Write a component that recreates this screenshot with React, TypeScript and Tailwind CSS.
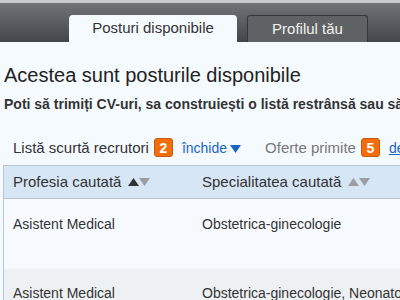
const Tri = ({ dir, color }: { dir: 'up' | 'down'; color: string }) => (
  <svg width="11" height="8" viewBox="0 0 11 8" className="inline-block">
    {dir === 'up' ? <polygon points="0,8 11,8 5.5,0" fill={color} /> : <polygon points="0,0 11,0 5.5,8" fill={color} />}
  </svg>
);

const Badge = ({ n }: { n: number }) => (
  <span className="inline-flex items-center justify-center w-[19px] h-[19px] rounded-[3px] bg-[#f46d0b] border border-[#c85a0c] text-white font-bold text-[14px] leading-none">
    {n}
  </span>
);

const rows = [
  { prof: 'Asistent Medical', spec: 'Obstetrica-ginecologie', bg: 'bg-[#f6faff]', h: 'h-[70px] pt-[16px]' },
  { prof: 'Asistent Medical', spec: 'Obstetrica-ginecologie, Neonatologie', bg: 'bg-[#eef1f4]', h: 'h-[70px] pt-[15px]' },
];

export default function App() {
  return (
    <div className="w-[400px] h-[300px] overflow-hidden bg-[#f5faff] font-['Liberation_Sans',Arial,sans-serif]">
      {/* top nav */}
      <div className="h-[42px] border-t-[3px] border-[#c9cacc] bg-gradient-to-b from-[#717477] to-[#42464a] flex items-end pl-[69px] gap-[10px]">
        <div className="w-[168px] h-[27px] bg-[#f5faff] rounded-t-[4px] flex items-center justify-center text-[15px] text-[#333]">
          Posturi disponibile
        </div>
        <div className="w-[121px] h-[27px] bg-[#5e6264] border border-b-0 border-[#34383b] rounded-t-[3px] flex items-center justify-center text-[15px] text-[#f2f2f2]">
          Profilul tău
        </div>
      </div>

      <div className="whitespace-nowrap">
        <h1 className="mt-[21px] px-[4px] text-[20px] leading-[24px] text-[#222]">Acestea sunt posturile disponibile</h1>
        <p className="mt-[8px] px-[4px] text-[14px] leading-[18px] font-bold text-[#333]">
          Poti să trimiți CV-uri, sa construiești o listă restrânsă sau să alegi
        </p>

        <div className="mt-[25px] h-[20px] flex items-center pl-[13px] text-[15px] text-[#333]">
          <span>Listă scurtă recrutori</span>
          <span className="ml-[5px]"><Badge n={2} /></span>
          <span className="ml-[9px] text-[14px] text-[#1a66c2]">închide</span>
          <span className="ml-[3px]"><Tri dir="down" color="#1a66c2" /></span>
          <span className="ml-[24px] text-[#777]">Oferte primite</span>
          <span className="ml-[5px]"><Badge n={5} /></span>
          <span className="ml-[9px] text-[14px] text-[#1a66c2] underline">detalii</span>
        </div>

        {/* table */}
        <div className="mt-[7px] ml-[3px] border-l border-t border-[#b8c6d3]">
          <div className="h-[33px] bg-[#d6e6f5] border-b border-[#b8c6d3] flex items-center text-[15px] text-[#333]">
            <div className="w-[198px] shrink-0 pl-[9px] flex items-center gap-[3px]">
              Profesia cautată
              <span className="ml-[4px] flex"><Tri dir="up" color="#333" /><Tri dir="down" color="#9a9ea3" /></span>
            </div>
            <div className="flex items-center gap-[3px]">
              Specialitatea cautată
              <span className="ml-[4px] flex"><Tri dir="up" color="#9a9ea3" /><Tri dir="down" color="#9a9ea3" /></span>
            </div>
          </div>
          {rows.map((r, i) => (
            <div key={i} className={`${r.bg} ${r.h} flex items-start text-[14px] leading-[18px] text-[#333]`}>
              <div className="w-[198px] shrink-0 pl-[9px]">{r.prof}</div>
              <div>{r.spec}</div>
            </div>
          ))}
        </div>
      </div>
    </div>
  );
}
